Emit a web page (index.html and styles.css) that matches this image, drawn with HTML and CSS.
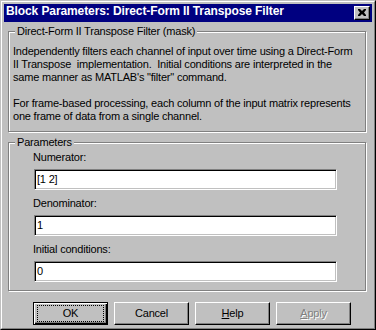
FILE: index.html
```html
<!DOCTYPE html>
<html>
<head>
<meta charset="utf-8">
<link rel="stylesheet" href="styles.css">
</head>
<body>
<div class="window">
  <div class="frame">
    <div class="titlebar">
      <span class="title">Block Parameters: Direct-Form II Transpose Filter</span>
      <span class="close"><svg width="8" height="7" viewBox="0 0 8 7"><path d="M0 0h2l2 2 2-2h2v1L6 3.5 8 6v1H6L4 5 2 7H0V6l2-2.5L0 1z" fill="#000"/></svg></span>
    </div>
    <div class="body">
      <fieldset class="group desc">
        <legend>Direct-Form II Transpose Filter (mask)</legend>
        <p>Independently filters each channel of input over time using a Direct-Form<br>II Transpose&nbsp; implementation.&nbsp; Initial conditions are interpreted in the<br>same manner as MATLAB's "filter" command.</p>
        <p>For frame-based processing, each column of the input matrix represents<br>one frame of data from a single channel.</p>
      </fieldset>
      <fieldset class="group params">
        <legend>Parameters</legend>
        <div class="label">Numerator:</div>
        <div class="edit">[1 2]</div>
        <div class="label">Denominator:</div>
        <div class="edit">1</div>
        <div class="label">Initial conditions:</div>
        <div class="edit">0</div>
      </fieldset>
      <div class="buttons">
        <div class="btn default"><span class="focus">OK</span></div>
        <div class="btn"><span class="cap">Cancel</span></div>
        <div class="btn"><span class="cap"><u>H</u>elp</span></div>
        <div class="btn disabled"><span class="cap"><u>A</u>pply</span></div>
      </div>
    </div>
  </div>
</div>
</body>
</html>
```
FILE: styles.css
```css
html, body {
  margin: 0;
  padding: 0;
  background: #c0c0c0;
}
body {
  font-family: "Liberation Sans", Arial, sans-serif;
  font-size: 11px;
  line-height: 13px;
  letter-spacing: -0.2px;
  color: #000;
}
.window {
  width: 376px;
  height: 330px;
  box-sizing: border-box;
  border: 1px solid;
  border-color: #c0c0c0 #000 #000 #c0c0c0;
  background: #c0c0c0;
}
.frame {
  height: 100%;
  box-sizing: border-box;
  border: 1px solid;
  border-color: #fff #808080 #808080 #fff;
  padding: 2px;
  display: flex;
  flex-direction: column;
}
.titlebar {
  height: 18px;
  flex: none;
  background: #000080;
  display: flex;
  align-items: flex-start;
  justify-content: space-between;
  padding: 0 2px 0 2px;
}
.title {
  color: #fff;
  font-weight: bold;
  font-size: 12px;
  line-height: 14px;
  letter-spacing: -0.1px;
  white-space: nowrap;
}
.close {
  margin-top: 2px;
  width: 16px;
  height: 14px;
  box-sizing: border-box;
  border: 1px solid;
  border-color: #fff #000 #000 #fff;
  box-shadow: inset -1px -1px 0 #808080;
  background: #c0c0c0;
  display: flex;
  align-items: center;
  justify-content: center;
  padding: 0 1px 1px 0;
}
.close svg { display: block; }
.body {
  flex: 1;
  padding: 3px 6px 0 4px;
}
.group {
  margin: 0;
  border: 1px solid #808080;
  box-shadow: 1px 1px 0 #fff, inset 1px 1px 0 #fff;
  min-inline-size: 0;
}
.group legend {
  padding: 0 2px;
  margin-left: 2px;
  background: #c0c0c0;
  line-height: 13px;
}
.desc {
  padding: 7px 4px 8px 4px;
}
.desc p {
  margin: 0;
  white-space: nowrap;
}
.desc p + p {
  margin-top: 13px;
}
.params {
  margin-top: 4px;
  padding: 2px 4px 8px 4px;
}
.label {
  margin-left: 20px;
}
.edit {
  margin: 5px 0 7px 21px;
  width: 303px;
  height: 21px;
  box-sizing: border-box;
  border: 1px solid;
  border-color: #808080 #fff #fff #808080;
  box-shadow: inset 1px 1px 0 #000, inset -1px -1px 0 #c0c0c0;
  background: #fff;
  padding: 2px 3px 0 2px;
  line-height: 14px;
}
.params .edit:last-child {
  margin-bottom: 0;
}
.buttons {
  display: flex;
  gap: 6px;
  margin: 11px 0 0 25px;
}
.btn {
  width: 75px;
  height: 23px;
  box-sizing: border-box;
  border: 1px solid;
  border-color: #fff #000 #000 #fff;
  box-shadow: inset -1px -1px 0 #808080;
  display: flex;
  align-items: center;
  justify-content: center;
}
.btn .cap {
  line-height: 13px;
}
.btn.default {
  border-color: #000;
  box-shadow: inset 1px 1px 0 #fff, inset -1px -1px 0 #000, inset -2px -2px 0 #808080;
  padding: 2px 3px 2px 3px;
}
.focus {
  flex: 1;
  align-self: stretch;
  border: 1px dotted #000;
  display: flex;
  align-items: center;
  justify-content: center;
}
.btn.disabled {
  color: #808080;
  text-shadow: 1px 1px 0 #fff;
}
```
